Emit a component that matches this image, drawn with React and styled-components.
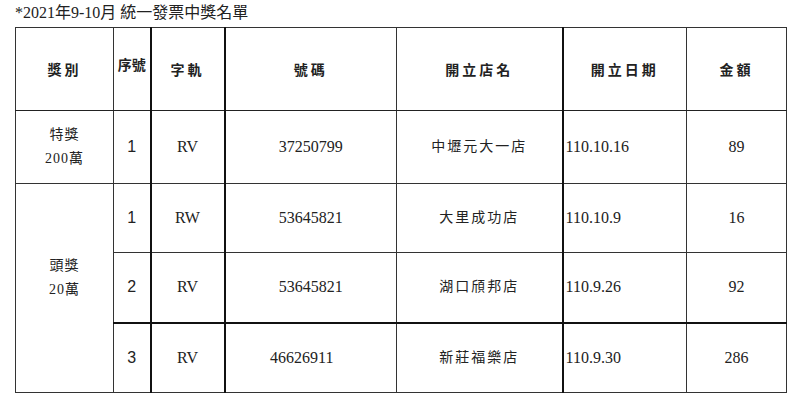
import React from 'react';
import styled, { createGlobalStyle } from 'styled-components';

const Global = createGlobalStyle`
  html, body {
    margin: 0;
    background: #fff;
  }
  body {
    font-family: "Liberation Serif", "Noto Sans CJK TC", serif;
    color: #222;
  }
`;

const Page = styled.div`
  width: 800px;
  height: 412px;
  padding: 4px 0 0 15px;
  box-sizing: border-box;
`;

const Title = styled.div`
  height: 23px;
  font-size: 16px;
  line-height: 18px;
  color: #222;
`;

const Table = styled.table`
  border-collapse: collapse;
  table-layout: fixed;
  width: 771px;
  border: 1px solid #333;
`;

const Col = styled.col`
  width: ${p => p.$w}px;
`;

const Cell = styled.td`
  border-top: ${p => (p.$thickTop ? '2px solid #111' : '1px solid #333')};
  border-left: ${p => (p.$thickLeft ? '2px solid #111' : '1px solid #333')};
  padding: 0 0 0 ${p => (p.$align === 'left' ? '2px' : '0')};
  font-size: 16px;
  text-align: ${p => p.$align || 'center'};
  vertical-align: middle;
  font-family: ${p => (p.$sans ? '"Liberation Sans", sans-serif' : 'inherit')};
  color: #222;
`;

const Head = styled.th`
  border-left: ${p => (p.$thickLeft ? '2px solid #111' : '1px solid #333')};
  border-bottom: 1px solid #222;
  padding: 0 0 ${p => (p.$tight ? '10px' : '0')} 0;
  font-weight: bold;
  font-size: 14px;
  letter-spacing: ${p => (p.$tight ? '0' : '3px')};
  vertical-align: middle;
  color: #222;
`;

const Label = styled.div`
  font-size: 14px;
  line-height: 24px;
  letter-spacing: ${p => (p.$wide ? '2px' : '1px')};
  padding-bottom: ${p => p.$lift || 0}px;
`;

const Number = styled.span`
  margin-right: ${p => (p.$shift ? '18px' : '0')};
`;

const Row = styled.tr`
  height: ${p => p.$h}px;
`;

const widths = [98, 37, 74, 172, 166, 124, 100];

const heads = [
  { t: '獎別' },
  { t: '序號', tight: true },
  { t: '字軌', thick: true },
  { t: '號碼', thick: true },
  { t: '開立店名' },
  { t: '開立日期', thick: true },
  { t: '金額' },
];

const rows = [
  { h: 73, no: '1', code: 'RV', num: '37250799', shop: '中壢元大一店', date: '110.10.16', amt: '89', label: ['特獎', '200萬'], span: 1 },
  { h: 69, no: '1', code: 'RW', num: '53645821', shop: '大里成功店', date: '110.10.9', amt: '16', label: ['頭獎', '20萬'], span: 3 },
  { h: 70, no: '2', code: 'RV', num: '53645821', shop: '湖口頎邦店', date: '110.9.26', amt: '92' },
  { h: 70, no: '3', code: 'RV', num: '46626911', shop: '新莊福樂店', date: '110.9.30', amt: '286', thickTop: true, shift: true },
];

export default function App() {
  return (
    <Page>
      <Global />
      <Title>*2021年9-10月 統一發票中獎名單</Title>
      <Table>
        <colgroup>
          {widths.map((w, i) => (
            <Col key={i} $w={w} />
          ))}
        </colgroup>
        <thead>
          <Row $h={83}>
            {heads.map(h => (
              <Head key={h.t} $thickLeft={h.thick} $tight={h.tight}>{h.t}</Head>
            ))}
          </Row>
        </thead>
        <tbody>
          {rows.map((r, i) => (
            <Row key={i} $h={r.h}>
              {r.label && (
                <Cell rowSpan={r.span}>
                  <Label $lift={r.span > 1 ? 20 : 0}>
                    {r.label[0]}<br />{r.label[1]}
                  </Label>
                </Cell>
              )}
              <Cell $sans $thickTop={r.thickTop}>{r.no}</Cell>
              <Cell $thickLeft $thickTop={r.thickTop}>{r.code}</Cell>
              <Cell $thickLeft $thickTop={r.thickTop}>
                <Number $shift={r.shift}>{r.num}</Number>
              </Cell>
              <Cell $thickTop={r.thickTop}><Label $wide>{r.shop}</Label></Cell>
              <Cell $thickLeft $thickTop={r.thickTop} $align="left">{r.date}</Cell>
              <Cell $thickTop={r.thickTop}>{r.amt}</Cell>
            </Row>
          ))}
        </tbody>
      </Table>
    </Page>
  );
}
